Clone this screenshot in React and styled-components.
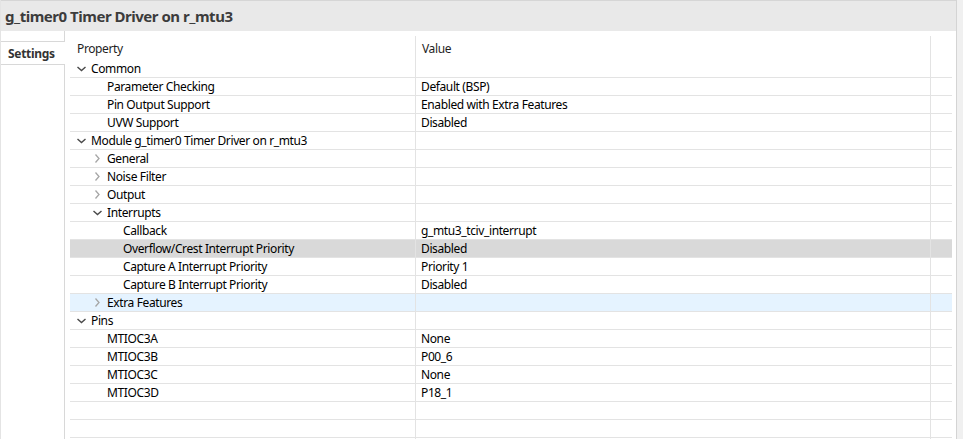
import React from "react";
import styled, { createGlobalStyle } from "styled-components";

const GlobalStyle = createGlobalStyle`
  html, body {
    margin: 0;
    padding: 0;
    background: #ffffff;
  }
  body {
    font-family: "Noto Sans", "Liberation Sans", sans-serif;
    font-size: 12px;
    letter-spacing: -0.38px;
    color: #000;
  }
`;

const rows = [
  { label: "Common", level: 0, toggle: "open" },
  { label: "Parameter Checking", level: 1, value: "Default (BSP)" },
  { label: "Pin Output Support", level: 1, value: "Enabled with Extra Features" },
  { label: "UVW Support", level: 1, value: "Disabled" },
  { label: "Module g_timer0 Timer Driver on r_mtu3", level: 0, toggle: "open" },
  { label: "General", level: 1, toggle: "closed" },
  { label: "Noise Filter", level: 1, toggle: "closed" },
  { label: "Output", level: 1, toggle: "closed" },
  { label: "Interrupts", level: 1, toggle: "open" },
  { label: "Callback", level: 2, value: "g_mtu3_tciv_interrupt" },
  { label: "Overflow/Crest Interrupt Priority", level: 2, value: "Disabled", state: "selected" },
  { label: "Capture A Interrupt Priority", level: 2, value: "Priority 1" },
  { label: "Capture B Interrupt Priority", level: 2, value: "Disabled" },
  { label: "Extra Features", level: 1, toggle: "closed", state: "hover" },
  { label: "Pins", level: 0, toggle: "open" },
  { label: "MTIOC3A", level: 1, value: "None" },
  { label: "MTIOC3B", level: 1, value: "P00_6" },
  { label: "MTIOC3C", level: 1, value: "None" },
  { label: "MTIOC3D", level: 1, value: "P18_1" },
  { label: "", level: 0 },
  { label: "", level: 0 },
  { label: "", level: 0 },
];

const rowBg = {
  selected: "#d9d9d9",
  hover: "#e5f3ff",
};

const Window = styled.div`
  display: flex;
  flex-direction: column;
  width: 963px;
  height: 439px;
  overflow: hidden;
  background: #f0f0f0;
`;

const Frame = styled.div`
  display: flex;
  flex-direction: column;
  width: 957px;
  height: 100%;
  border-right: 1px solid #d4d4d4;
  border-left: 1px solid #e4e4e4;
  background: #fff;
  box-sizing: border-box;
`;

const TitleBar = styled.div`
  height: 31px;
  flex: none;
  box-sizing: border-box;
  border-top: 1px solid #d6d6d6;
  background: #e9e9e9;
  padding-left: 4px;
  display: flex;
  align-items: center;
  font-size: 15px;
  font-weight: 700;
  letter-spacing: -0.48px;
  color: #3c3c3c;
`;

const Body = styled.div`
  flex: 1;
  display: flex;
  min-height: 0;
`;

const Sidebar = styled.div`
  width: 63px;
  flex: none;
  border-right: 1px solid #d8d8d8;
  padding-top: 10px;
`;

const Tab = styled.div`
  height: 22px;
  margin-right: -1px;
  background: #fff;
  border-top: 1px solid #d8d8d8;
  border-bottom: 1px solid #d8d8d8;
  padding-left: 7px;
  display: flex;
  align-items: center;
  font-weight: 700;
  letter-spacing: -0.3px;
  color: #333;
`;

const Content = styled.div`
  flex: 1;
  padding: 5px 4px 0 5px;
  overflow: hidden;
`;

const Grid = styled.div`
  display: grid;
  grid-template-columns: 345px 515px 22px;
`;

const HeadCell = styled.div`
  height: 24px;
  display: flex;
  align-items: center;
  padding-left: ${(p) => (p.$first ? "7px" : "6px")};
  border-left: ${(p) => (p.$first ? "none" : "1px solid #e3e3e3")};
  color: #1e1e1e;
`;

const Cell = styled.div`
  height: 17px;
  display: flex;
  align-items: center;
  white-space: nowrap;
  border-bottom: 1px solid #e3e3e3;
  border-left: ${(p) => (p.$first ? "none" : "1px solid #e3e3e3")};
  padding-left: ${(p) => p.$pad}px;
  background: ${(p) => rowBg[p.$state] || "transparent"};
`;

const Twisty = styled.svg`
  width: 15px;
  height: 17px;
  flex: none;
`;

function Toggle({ kind }) {
  if (kind === "open") {
    return (
      <Twisty viewBox="0 0 15 17">
        <polyline points="1.5,7 5.5,10.5 9.5,7" fill="none" stroke="#4a4a4a" strokeWidth="1.4" />
      </Twisty>
    );
  }
  if (kind === "closed") {
    return (
      <Twisty viewBox="0 0 15 17">
        <polyline points="3.5,4.5 7,8.5 3.5,12.5" fill="none" stroke="#a6a6a6" strokeWidth="1.3" />
      </Twisty>
    );
  }
  return <Twisty viewBox="0 0 15 17" />;
}

const App = () => {
  return (
    <>
      <GlobalStyle />
      <Window>
        <Frame>
          <TitleBar>g_timer0 Timer Driver on r_mtu3</TitleBar>
          <Body>
            <Sidebar>
              <Tab>Settings</Tab>
            </Sidebar>
            <Content>
              <Grid>
                <HeadCell $first>Property</HeadCell>
                <HeadCell>Value</HeadCell>
                <HeadCell />
                {rows.map((r, i) => (
                  <React.Fragment key={i}>
                    <Cell $first $pad={6 + r.level * 16} $state={r.state}>
                      <Toggle kind={r.toggle} />
                      {r.label}
                    </Cell>
                    <Cell $pad={5} $state={r.state}>
                      {r.value}
                    </Cell>
                    <Cell $pad={0} $state={r.state} />
                  </React.Fragment>
                ))}
              </Grid>
            </Content>
          </Body>
        </Frame>
      </Window>
    </>
  );
};

export default App;
